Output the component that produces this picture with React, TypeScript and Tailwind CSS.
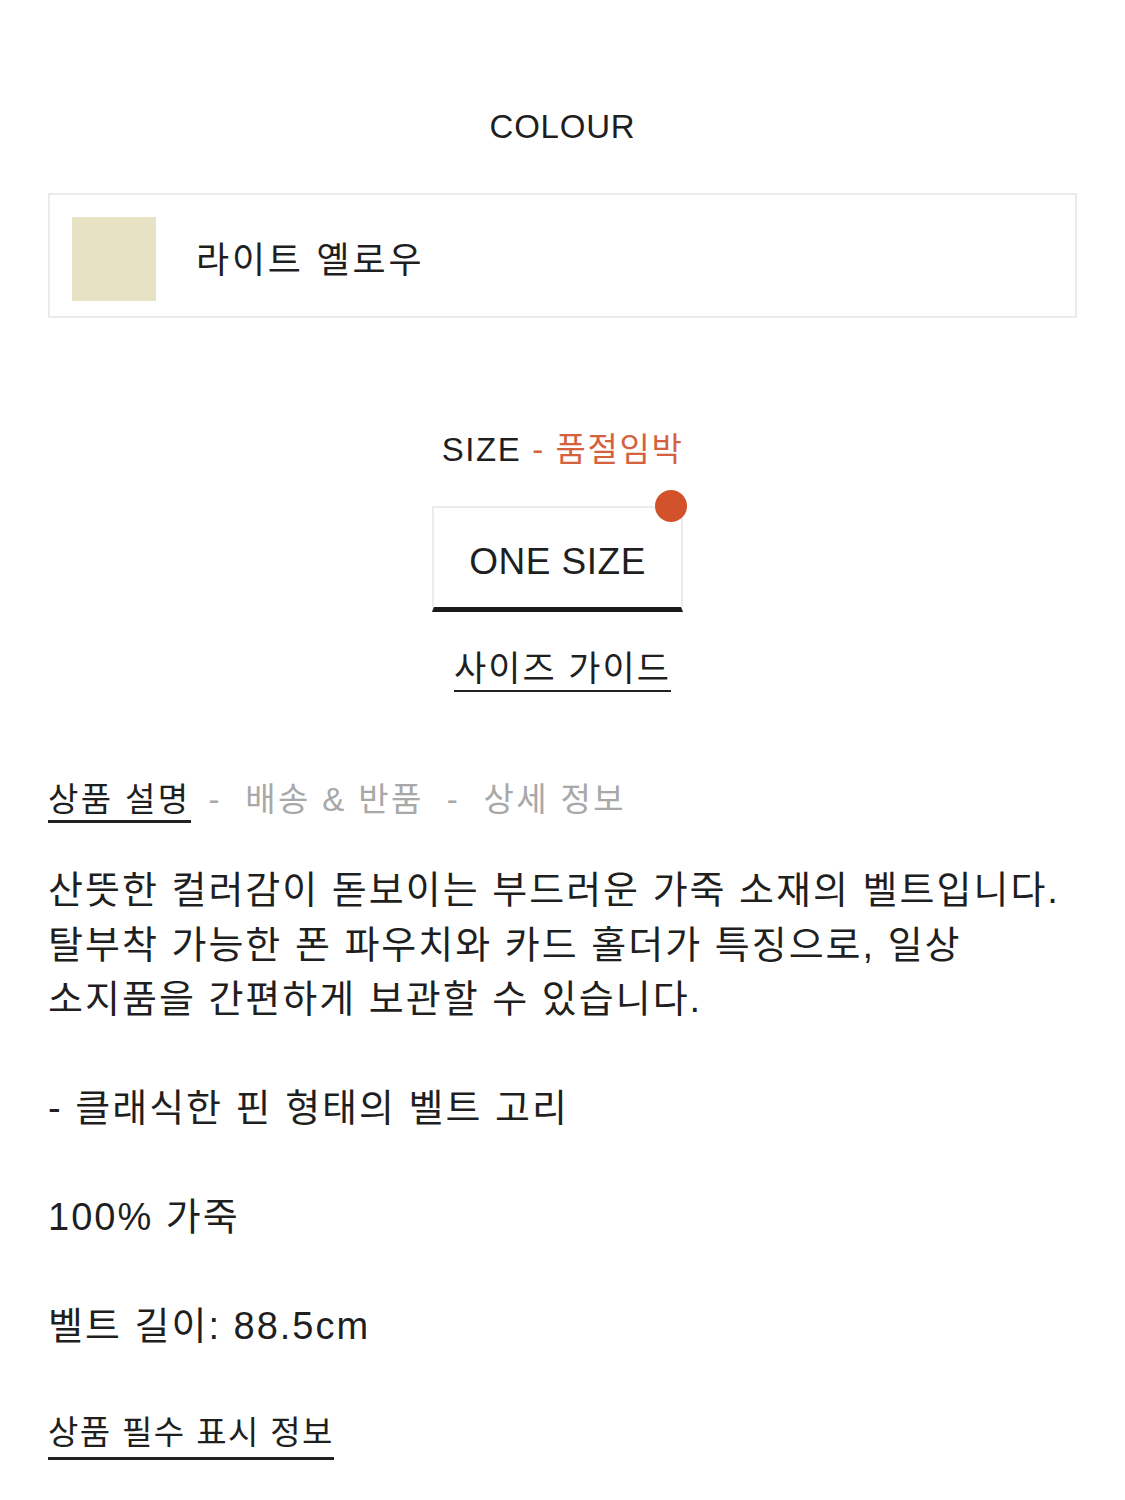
const FONT = "font-['Liberation_Sans','Noto_Sans_CJK_KR',sans-serif]";

export default function App() {
  return (
    <div className={`${FONT} min-h-[1500px] w-[1125px] bg-white px-[48px] text-[#1f1f1f]`}>
      <h2 className="pt-[107px] text-center text-[33px] leading-[40px] tracking-[0.8px]">COLOUR</h2>

      <div className="mt-[46px] flex h-[125px] items-start border-2 border-[#ebebeb] px-[22px] pt-[22px]">
        <div className="h-[84px] w-[84px] bg-[#e6e2c3]" />
        <span className="ml-[40px] mt-[22px] text-[36px] leading-[44px] tracking-[2.8px]">라이트 옐로우</span>
      </div>

      <h2 className="mt-[112px] text-center text-[33px] leading-[40px] tracking-[1.6px]">
        SIZE <span className="text-[#d4623f]">- 품절임박</span>
      </h2>

      <div className="relative ml-[384px] mt-[36px] flex h-[106px] w-[251px] items-center justify-center border-x-2 border-t-2 border-b-[5px] border-x-[#ececec] border-t-[#ececec] border-b-[#1a1a1a] pt-[8px]">
        <span className="text-[37px] tracking-[0.5px]">ONE SIZE</span>
        <span className="absolute -right-[6px] -top-[18px] h-[32px] w-[32px] rounded-full bg-[#d2522b]" />
      </div>

      <div className="mt-[36px] text-center">
        <span className="inline-block border-b-2 border-[#222] text-[35px] leading-[42px] tracking-[2px]">사이즈 가이드</span>
      </div>

      <div className="mt-[88px] flex items-start text-[33px] leading-[40px] tracking-[2.4px]">
        <span className="border-b-[3px] border-[#222]">상품 설명</span>
        <span className="ml-[18px] whitespace-pre text-[#a8a8a8]">-  배송 &amp; 반품  -  상세 정보</span>
      </div>

      <div className="mt-[40px] text-[38px] leading-[54.5px] tracking-[2px]">
        <p>
          산뜻한 컬러감이 돋보이는 부드러운 가죽 소재의 벨트입니다.
          <br />
          탈부착 가능한 폰 파우치와 카드 홀더가 특징으로, 일상
          <br />
          소지품을 간편하게 보관할 수 있습니다.
        </p>
        <p className="mt-[54.5px]">- 클래식한 핀 형태의 벨트 고리</p>
        <p className="mt-[54.5px]">100% 가죽</p>
        <p className="mt-[54.5px]">벨트 길이: 88.5cm</p>
      </div>

      <div className="mt-[59px]">
        <span className="inline-block border-b-[3px] border-[#222] pb-[4px] text-[33px] leading-[40px] tracking-[1.4px]">상품 필수 표시 정보</span>
      </div>
    </div>
  );
}
